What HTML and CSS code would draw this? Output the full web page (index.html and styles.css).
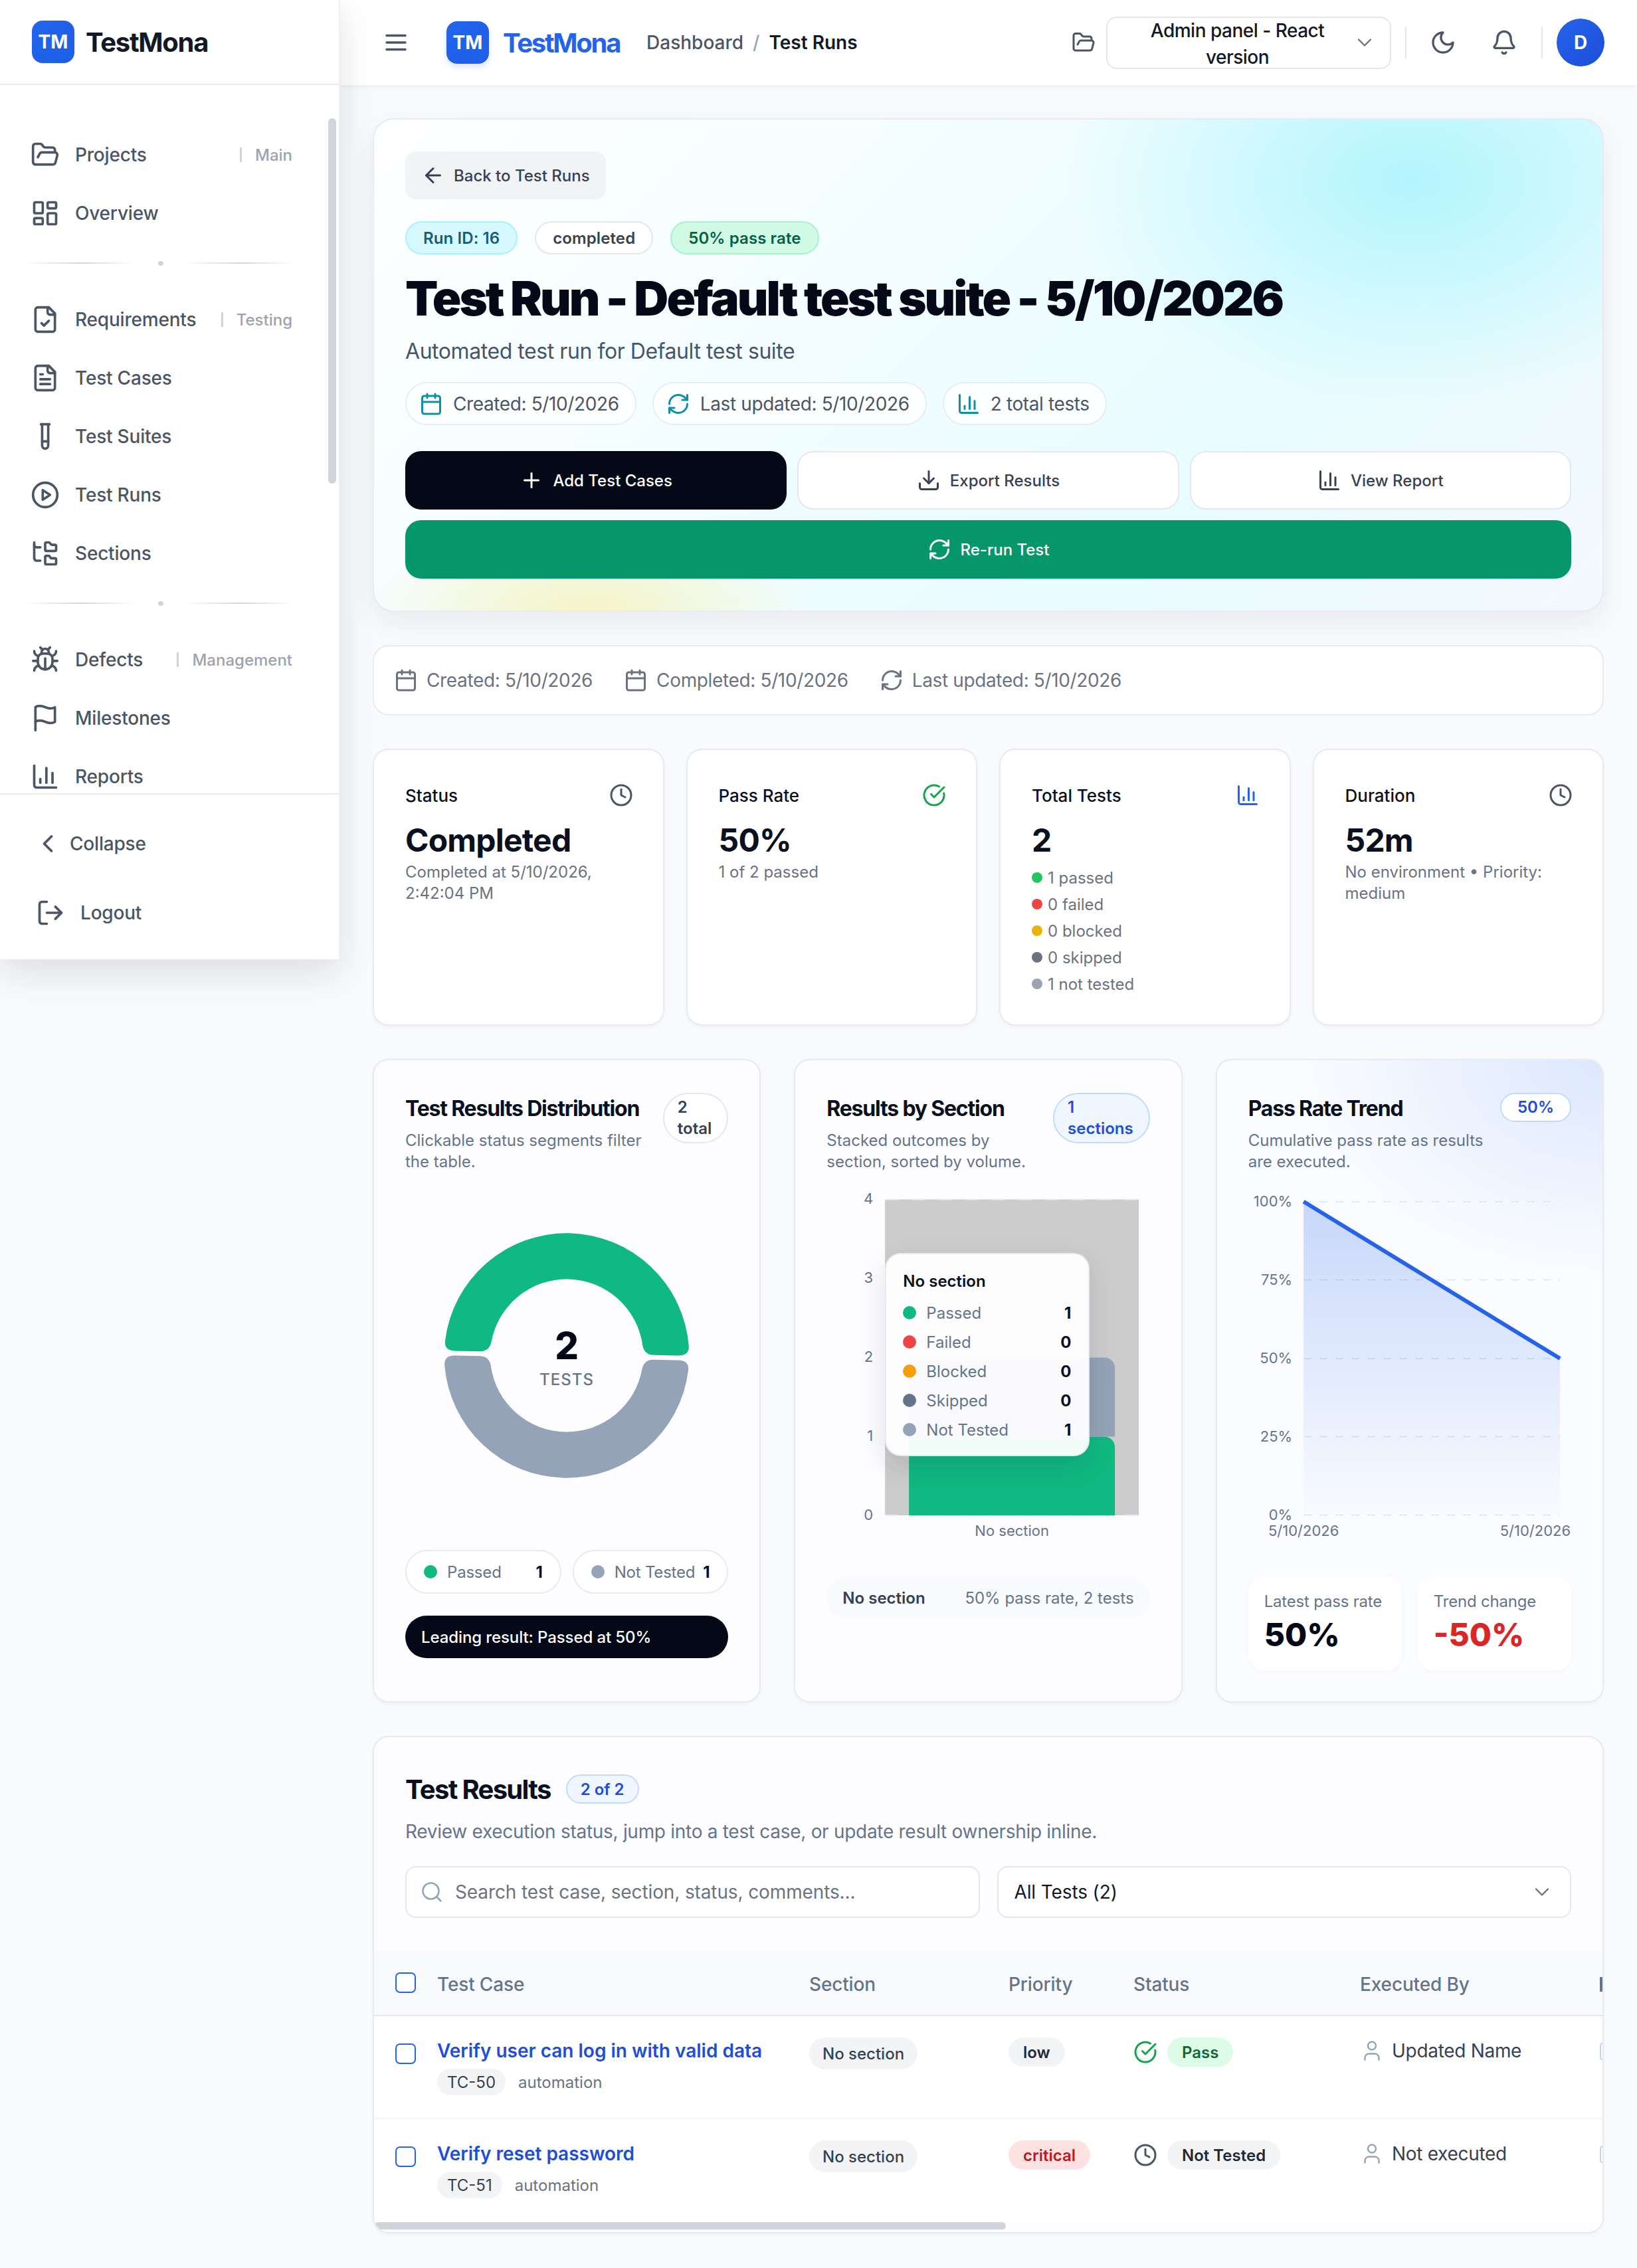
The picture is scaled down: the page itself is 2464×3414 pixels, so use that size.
FILE: index.html
```html
<!DOCTYPE html>
<html lang="en">
<head>
    <meta charset="UTF-8">
    <meta name="viewport" content="width=device-width, initial-scale=1.0">
    <title>TestMona - Test Run</title>
    <link rel="stylesheet" href="styles.css">
</head>
<body>
    <svg class="icon-defs" xmlns="http://www.w3.org/2000/svg">
        <symbol id="i-folder" viewBox="0 0 24 24"><path d="m6 14 1.5-2.9A2 2 0 0 1 9.24 10H20a2 2 0 0 1 1.94 2.5l-1.54 6a2 2 0 0 1-1.95 1.5H4a2 2 0 0 1-2-2V5a2 2 0 0 1 2-2h3.9a2 2 0 0 1 1.69.9l.81 1.2a2 2 0 0 0 1.67.9H18a2 2 0 0 1 2 2v2"/></symbol>
        <symbol id="i-overview" viewBox="0 0 24 24"><rect x="3" y="3" width="7" height="9" rx="1"/><rect x="14" y="3" width="7" height="5" rx="1"/><rect x="14" y="12" width="7" height="9" rx="1"/><rect x="3" y="16" width="7" height="5" rx="1"/></symbol>
        <symbol id="i-file-check" viewBox="0 0 24 24"><path d="M15 2H6a2 2 0 0 0-2 2v16a2 2 0 0 0 2 2h12a2 2 0 0 0 2-2V7Z"/><path d="M14 2v4a2 2 0 0 0 2 2h4"/><path d="m9 15 2 2 4-4"/></symbol>
        <symbol id="i-file-text" viewBox="0 0 24 24"><path d="M15 2H6a2 2 0 0 0-2 2v16a2 2 0 0 0 2 2h12a2 2 0 0 0 2-2V7Z"/><path d="M14 2v4a2 2 0 0 0 2 2h4"/><path d="M10 9H8"/><path d="M16 13H8"/><path d="M16 17H8"/></symbol>
        <symbol id="i-tube" viewBox="0 0 24 24"><path d="M14.5 2v17.5c0 1.4-1.1 2.5-2.5 2.5c-1.4 0-2.5-1.1-2.5-2.5V2"/><path d="M8.5 2h7"/><path d="M14.5 16h-5"/></symbol>
        <symbol id="i-play" viewBox="0 0 24 24"><circle cx="12" cy="12" r="10"/><polygon points="10 8 16 12 10 16 10 8"/></symbol>
        <symbol id="i-tree" viewBox="0 0 24 24"><path d="M20 10a1 1 0 0 0 1-1V6a1 1 0 0 0-1-1h-2.5a1 1 0 0 1-.8-.4l-.9-1.2A1 1 0 0 0 15 3h-2a1 1 0 0 0-1 1v5a1 1 0 0 0 1 1Z"/><path d="M20 21a1 1 0 0 0 1-1v-3a1 1 0 0 0-1-1h-2.9a1 1 0 0 1-.88-.55l-.42-.85a1 1 0 0 0-.92-.6H13a1 1 0 0 0-1 1v5a1 1 0 0 0 1 1Z"/><path d="M3 5a2 2 0 0 0 2 2h3"/><path d="M3 3v13a2 2 0 0 0 2 2h3"/></symbol>
        <symbol id="i-bug" viewBox="0 0 24 24"><path d="m8 2 1.88 1.88"/><path d="M14.12 3.88 16 2"/><path d="M9 7.13v-1a3.003 3.003 0 1 1 6 0v1"/><path d="M12 20c-3.3 0-6-2.7-6-6v-3a4 4 0 0 1 4-4h4a4 4 0 0 1 4 4v3c0 3.3-2.7 6-6 6"/><path d="M12 20v-9"/><path d="M6.53 9C4.6 8.8 3 7.1 3 5"/><path d="M6 13H2"/><path d="M3 21c0-2.1 1.7-3.9 3.8-4"/><path d="M20.97 5c0 2.1-1.6 3.8-3.5 4"/><path d="M22 13h-4"/><path d="M17.2 17c2.1.1 3.8 1.9 3.8 4"/></symbol>
        <symbol id="i-flag" viewBox="0 0 24 24"><path d="M4 15s1-1 4-1 5 2 8 2 4-1 4-1V3s-1 1-4 1-5-2-8-2-4 1-4 1z"/><path d="M4 22v-7"/></symbol>
        <symbol id="i-chart" viewBox="0 0 24 24"><path d="M3 3v16a2 2 0 0 0 2 2h16"/><path d="M18 17V9"/><path d="M13 17V5"/><path d="M8 17v-3"/></symbol>
        <symbol id="i-chevron-left" viewBox="0 0 24 24"><path d="m15 18-6-6 6-6"/></symbol>
        <symbol id="i-chevron-down" viewBox="0 0 24 24"><path d="m6 9 6 6 6-6"/></symbol>
        <symbol id="i-logout" viewBox="0 0 24 24"><path d="M9 21H5a2 2 0 0 1-2-2V5a2 2 0 0 1 2-2h4"/><path d="m16 17 5-5-5-5"/><path d="M21 12H9"/></symbol>
        <symbol id="i-menu" viewBox="0 0 24 24"><path d="M4 12h16"/><path d="M4 6h16"/><path d="M4 18h16"/></symbol>
        <symbol id="i-moon" viewBox="0 0 24 24"><path d="M12 3a6 6 0 0 0 9 9 9 9 0 1 1-9-9Z"/></symbol>
        <symbol id="i-bell" viewBox="0 0 24 24"><path d="M10.268 21a2 2 0 0 0 3.464 0"/><path d="M3.262 15.326A1 1 0 0 0 4 17h16a1 1 0 0 0 .74-1.673C19.41 13.956 18 12.499 18 8A6 6 0 0 0 6 8c0 4.499-1.411 5.956-2.738 7.326"/></symbol>
        <symbol id="i-arrow-left" viewBox="0 0 24 24"><path d="m12 19-7-7 7-7"/><path d="M19 12H5"/></symbol>
        <symbol id="i-calendar" viewBox="0 0 24 24"><rect x="3" y="4" width="18" height="18" rx="2"/><path d="M16 2v4"/><path d="M8 2v4"/><path d="M3 10h18"/></symbol>
        <symbol id="i-refresh" viewBox="0 0 24 24"><path d="M3 12a9 9 0 0 1 9-9 9.75 9.75 0 0 1 6.74 2.74L21 8"/><path d="M21 3v5h-5"/><path d="M21 12a9 9 0 0 1-9 9 9.75 9.75 0 0 1-6.74-2.74L3 16"/><path d="M8 16H3v5"/></symbol>
        <symbol id="i-plus" viewBox="0 0 24 24"><path d="M5 12h14"/><path d="M12 5v14"/></symbol>
        <symbol id="i-download" viewBox="0 0 24 24"><path d="M21 15v4a2 2 0 0 1-2 2H5a2 2 0 0 1-2-2v-4"/><path d="m7 10 5 5 5-5"/><path d="M12 15V3"/></symbol>
        <symbol id="i-clock" viewBox="0 0 24 24"><circle cx="12" cy="12" r="10"/><path d="M12 6v6l4 2"/></symbol>
        <symbol id="i-check" viewBox="0 0 24 24"><path d="M21.801 10A10 10 0 1 1 17 3.335"/><path d="m9 11 3 3L22 4"/></symbol>
        <symbol id="i-search" viewBox="0 0 24 24"><path d="m21 21-4.34-4.34"/><circle cx="11" cy="11" r="8"/></symbol>
        <symbol id="i-user" viewBox="0 0 24 24"><path d="M19 21v-2a4 4 0 0 0-4-4H9a4 4 0 0 0-4 4v2"/><circle cx="12" cy="7" r="4"/></symbol>
    </svg>

    <div class="app">
        <aside class="sidebar">
            <div class="sidebar-head">
                <div class="logo-box">TM</div>
                <div class="sidebar-brand">TestMona</div>
            </div>
            <nav class="sidebar-nav">
                <div class="sidebar-scroll"></div>
                <a class="nav-item"><svg class="icon nav-icon"><use href="#i-folder"/></svg><span>Projects</span><span class="nav-tag">Main</span></a>
                <a class="nav-item"><svg class="icon nav-icon"><use href="#i-overview"/></svg><span>Overview</span></a>
                <div class="nav-divider"><i></i><b></b><i></i></div>
                <a class="nav-item"><svg class="icon nav-icon"><use href="#i-file-check"/></svg><span>Requirements</span><span class="nav-tag">Testing</span></a>
                <a class="nav-item"><svg class="icon nav-icon"><use href="#i-file-text"/></svg><span>Test Cases</span></a>
                <a class="nav-item"><svg class="icon nav-icon"><use href="#i-tube"/></svg><span>Test Suites</span></a>
                <a class="nav-item"><svg class="icon nav-icon"><use href="#i-play"/></svg><span>Test Runs</span></a>
                <a class="nav-item"><svg class="icon nav-icon"><use href="#i-tree"/></svg><span>Sections</span></a>
                <div class="nav-divider"><i></i><b></b><i></i></div>
                <a class="nav-item"><svg class="icon nav-icon"><use href="#i-bug"/></svg><span>Defects</span><span class="nav-tag">Management</span></a>
                <a class="nav-item"><svg class="icon nav-icon"><use href="#i-flag"/></svg><span>Milestones</span></a>
                <a class="nav-item"><svg class="icon nav-icon"><use href="#i-chart"/></svg><span>Reports</span></a>
            </nav>
            <div class="sidebar-foot">
                <a class="foot-item collapse"><svg class="icon nav-icon"><use href="#i-chevron-left"/></svg><span>Collapse</span></a>
                <a class="foot-item logout"><svg class="icon nav-icon"><use href="#i-logout"/></svg><span>Logout</span></a>
            </div>
        </aside>

        <div class="main">
            <header class="topbar">
                <svg class="icon menu-icon"><use href="#i-menu"/></svg>
                <div class="logo-box logo-tall">TM</div>
                <div class="topbar-brand">TestMona</div>
                <div class="crumbs">
                    <span>Dashboard</span>
                    <span class="crumb-sep">/</span>
                    <span class="crumb-current">Test Runs</span>
                </div>
                <div class="topbar-right">
                    <svg class="icon folder-icon"><use href="#i-folder"/></svg>
                    <div class="project-select">
                        <span>Admin panel - React version</span>
                        <svg class="icon chevron"><use href="#i-chevron-down"/></svg>
                    </div>
                    <div class="topbar-line line-first"></div>
                    <svg class="icon top-icon"><use href="#i-moon"/></svg>
                    <svg class="icon top-icon"><use href="#i-bell"/></svg>
                    <div class="topbar-line"></div>
                    <div class="avatar">D</div>
                </div>
            </header>

            <main class="content">
                <section class="hero">
                    <a class="back-btn"><svg class="icon icon-md"><use href="#i-arrow-left"/></svg>Back to Test Runs</a>
                    <div class="hero-badges">
                        <span class="hero-badge badge-cyan">Run ID: 16</span>
                        <span class="hero-badge badge-plain">completed</span>
                        <span class="hero-badge badge-green">50% pass rate</span>
                    </div>
                    <h1>Test Run - Default test suite - 5/10/2026</h1>
                    <p class="hero-sub">Automated test run for Default test suite</p>
                    <div class="hero-meta">
                        <span class="meta-pill"><svg class="icon icon-md teal"><use href="#i-calendar"/></svg>Created: 5/10/2026</span>
                        <span class="meta-pill"><svg class="icon icon-md teal"><use href="#i-refresh"/></svg>Last updated: 5/10/2026</span>
                        <span class="meta-pill"><svg class="icon icon-md teal"><use href="#i-chart"/></svg>2 total tests</span>
                    </div>
                    <div class="hero-actions">
                        <a class="btn btn-dark"><svg class="icon icon-md"><use href="#i-plus"/></svg>Add Test Cases</a>
                        <a class="btn btn-white"><svg class="icon icon-md"><use href="#i-download"/></svg>Export Results</a>
                        <a class="btn btn-white"><svg class="icon icon-md"><use href="#i-chart"/></svg>View Report</a>
                        <a class="btn btn-green"><svg class="icon icon-md"><use href="#i-refresh"/></svg>Re-run Test</a>
                    </div>
                </section>

                <section class="dates-bar">
                    <span class="date-item"><svg class="icon icon-md"><use href="#i-calendar"/></svg>Created: 5/10/2026</span>
                    <span class="date-item"><svg class="icon icon-md"><use href="#i-calendar"/></svg>Completed: 5/10/2026</span>
                    <span class="date-item"><svg class="icon icon-md"><use href="#i-refresh"/></svg>Last updated: 5/10/2026</span>
                </section>

                <section class="stats">
                    <div class="stat-card">
                        <div class="stat-head"><span>Status</span><svg class="icon icon-md gray"><use href="#i-clock"/></svg></div>
                        <div class="stat-value">Completed</div>
                        <div class="stat-sub">Completed at 5/10/2026, 2:42:04 PM</div>
                    </div>
                    <div class="stat-card">
                        <div class="stat-head"><span>Pass Rate</span><svg class="icon icon-md green"><use href="#i-check"/></svg></div>
                        <div class="stat-value">50%</div>
                        <div class="stat-sub">1 of 2 passed</div>
                    </div>
                    <div class="stat-card">
                        <div class="stat-head"><span>Total Tests</span><svg class="icon icon-md blue"><use href="#i-chart"/></svg></div>
                        <div class="stat-value">2</div>
                        <ul class="stat-list">
                            <li><i class="dot dot-pass"></i>1 passed</li>
                            <li><i class="dot dot-fail"></i>0 failed</li>
                            <li><i class="dot dot-block"></i>0 blocked</li>
                            <li><i class="dot dot-skip"></i>0 skipped</li>
                            <li><i class="dot dot-none"></i>1 not tested</li>
                        </ul>
                    </div>
                    <div class="stat-card">
                        <div class="stat-head"><span>Duration</span><svg class="icon icon-md gray"><use href="#i-clock"/></svg></div>
                        <div class="stat-value">52m</div>
                        <div class="stat-sub">No environment • Priority: medium</div>
                    </div>
                </section>

                <section class="charts">
                    <div class="chart-card">
                        <div class="chart-head">
                            <div class="chart-titles">
                                <h3>Test Results Distribution</h3>
                                <p>Clickable status segments filter the table.</p>
                            </div>
                            <span class="chart-badge">2 total</span>
                        </div>
                        <svg class="donut" viewBox="0 0 486 552">
                            <g transform="translate(243 275.5) rotate(1.2)">
                                <path fill="#10b981" d="M-168-3.5Q-184.5-3.5-183.5-18A184.4 184.4 0 0 1 183.5-18Q184.5-3.5 168-3.5L131-3.5Q117-3.5 114-17A115.3 115.3 0 0 0-114-17Q-117-3.5-131-3.5Z"/>
                                <path fill="#94a3b8" d="M-168 3.5Q-184.5 3.5-183.5 18A184.4 184.4 0 0 0 183.5 18Q184.5 3.5 168 3.5L131 3.5Q117 3.5 114 17A115.3 115.3 0 0 1-114 17Q-117 3.5-131 3.5Z"/>
                            </g>
                            <text class="donut-num" x="243" y="281" text-anchor="middle">2</text>
                            <text class="donut-label" x="243" y="320" text-anchor="middle">TESTS</text>
                        </svg>
                        <div class="legend-row">
                            <span class="legend-pill"><i class="dot dot-pass"></i><span>Passed</span><b>1</b></span>
                            <span class="legend-pill"><i class="dot dot-none2"></i><span>Not Tested</span><b>1</b></span>
                        </div>
                        <div class="leading">Leading result: Passed at 50%</div>
                    </div>

                    <div class="chart-card">
                        <div class="chart-head">
                            <div class="chart-titles">
                                <h3>Results by Section</h3>
                                <p>Stacked outcomes by section, sorted by volume.</p>
                            </div>
                            <span class="chart-badge badge-blue">1 sections</span>
                        </div>
                        <div class="bar-chart">
                            <svg viewBox="0 0 486 580">
                                <rect x="88" y="40.5" width="382" height="475.5" fill="#cccccc"/>
                                <path d="M88 40.5H470M88 516H470" stroke="#e8edf5" stroke-width="2" stroke-dasharray="20 20"/>
                                <path fill="#10b981" d="M124 516V397.5H418a16 16 0 0 1 16 16V516Z"/>
                                <path fill="#94a3b8" d="M124 397.5V278.5H418a16 16 0 0 1 16 16V397.5Z"/>
                                <g class="axis" text-anchor="end">
                                    <text x="70" y="47">4</text>
                                    <text x="70" y="166">3</text>
                                    <text x="70" y="285">2</text>
                                    <text x="70" y="404">1</text>
                                    <text x="70" y="523">0</text>
                                </g>
                                <text class="axis" x="279" y="547" text-anchor="middle">No section</text>
                            </svg>
                            <div class="chart-tip">
                                <div class="tip-title">No section</div>
                                <div class="tip-row"><i class="dot dot-pass"></i><span>Passed</span><b>1</b></div>
                                <div class="tip-row"><i class="dot dot-fail"></i><span>Failed</span><b>0</b></div>
                                <div class="tip-row"><i class="dot dot-amber"></i><span>Blocked</span><b>0</b></div>
                                <div class="tip-row"><i class="dot dot-slate"></i><span>Skipped</span><b>0</b></div>
                                <div class="tip-row"><i class="dot dot-none2"></i><span>Not Tested</span><b>1</b></div>
                            </div>
                        </div>
                        <div class="section-line"><b>No section</b><span>50% pass rate, 2 tests</span></div>
                    </div>

                    <div class="chart-card trend-card">
                        <div class="chart-head">
                            <div class="chart-titles">
                                <h3>Pass Rate Trend</h3>
                                <p>Cumulative pass rate as results are executed.</p>
                            </div>
                            <span class="chart-badge badge-blue badge-one">50%</span>
                        </div>
                        <svg class="trend-chart" viewBox="0 0 486 580">
                            <defs>
                                <linearGradient id="trendFill" x1="0" y1="0" x2="0" y2="1">
                                    <stop offset="0" stop-color="#2563eb" stop-opacity="0.24"/>
                                    <stop offset="1" stop-color="#2563eb" stop-opacity="0.01"/>
                                </linearGradient>
                            </defs>
                            <path d="M83 43.7H469M83 161.6H469M83 280H469M83 397.6H469M83 515.5H469" stroke="#e1e8f6" stroke-width="2" stroke-dasharray="12 12"/>
                            <path fill="url(#trendFill)" d="M83 43.7L469 280V515.5H83Z"/>
                            <path fill="none" stroke="#2563eb" stroke-width="6" d="M83 43.7L469 280"/>
                            <g class="axis" text-anchor="end">
                                <text x="66" y="51">100%</text>
                                <text x="66" y="169">75%</text>
                                <text x="66" y="287">50%</text>
                                <text x="66" y="405">25%</text>
                                <text x="66" y="523">0%</text>
                            </g>
                            <text class="axis" x="83" y="547" text-anchor="middle">5/10/2026</text>
                            <text class="axis" x="485" y="547" text-anchor="end">5/10/2026</text>
                        </svg>
                        <div class="trend-stats">
                            <div class="trend-stat"><span>Latest pass rate</span><b>50%</b></div>
                            <div class="trend-stat"><span>Trend change</span><b class="red">-50%</b></div>
                        </div>
                    </div>
                </section>

                <section class="results">
                    <div class="results-head">
                        <div class="results-title"><h2>Test Results</h2><span class="count-badge">2 of 2</span></div>
                        <p>Review execution status, jump into a test case, or update result ownership inline.</p>
                        <div class="filters">
                            <div class="field"><svg class="icon icon-md search-icon"><use href="#i-search"/></svg><span>Search test case, section, status, comments...</span></div>
                            <div class="field field-select"><span>All Tests (2)</span><svg class="icon chevron"><use href="#i-chevron-down"/></svg></div>
                        </div>
                    </div>
                    <div class="table-wrap">
                        <table>
                            <thead>
                                <tr>
                                    <th class="col-check"><i class="checkbox"></i></th>
                                    <th class="col-case">Test Case</th>
                                    <th class="col-section">Section</th>
                                    <th class="col-priority">Priority</th>
                                    <th class="col-status">Status</th>
                                    <th class="col-exec">Executed By</th>
                                    <th class="col-last"><i class="cut-stem"></i></th>
                                </tr>
                            </thead>
                            <tbody>
                                <tr>
                                    <td class="check-cell"><i class="checkbox"></i></td>
                                    <td>
                                        <a class="case-link">Verify user can log in with valid data</a>
                                        <div class="case-meta"><span class="case-id">TC-50</span><span>automation</span></div>
                                    </td>
                                    <td><span class="pill pill-section">No section</span></td>
                                    <td><span class="pill">low</span></td>
                                    <td><div class="status-cell"><svg class="icon icon-md green"><use href="#i-check"/></svg><span class="pill pill-pass">Pass</span></div></td>
                                    <td><div class="exec-cell"><svg class="icon icon-md slate"><use href="#i-user"/></svg>Updated Name</div></td>
                                    <td><i class="cut-box"></i></td>
                                </tr>
                                <tr>
                                    <td class="check-cell"><i class="checkbox"></i></td>
                                    <td>
                                        <a class="case-link">Verify reset password</a>
                                        <div class="case-meta"><span class="case-id">TC-51</span><span>automation</span></div>
                                    </td>
                                    <td><span class="pill pill-section">No section</span></td>
                                    <td><span class="pill pill-critical">critical</span></td>
                                    <td><div class="status-cell"><svg class="icon icon-md gray"><use href="#i-clock"/></svg><span class="pill">Not Tested</span></div></td>
                                    <td><div class="exec-cell"><svg class="icon icon-md slate"><use href="#i-user"/></svg>Not executed</div></td>
                                    <td><i class="cut-box"></i></td>
                                </tr>
                            </tbody>
                        </table>
                    </div>
                    <div class="table-scroll"></div>
                </section>
            </main>
        </div>
    </div>
</body>
</html>
```

FILE: styles.css
```css
* {
    margin: 0;
    padding: 0;
    box-sizing: border-box;
    font-family: Inter, 'Noto Sans', sans-serif;
}

html, body {
    height: 3414px;
    overflow: hidden;
}

body {
    background: #f9fafc;
    color: #0b1020;
}

.icon-defs {
    display: none;
}

.icon {
    fill: none;
    stroke: currentColor;
    stroke-width: 2;
    stroke-linecap: round;
    stroke-linejoin: round;
    flex-shrink: 0;
    display: block;
}

.icon-md {
    width: 36px;
    height: 36px;
}

.teal { color: #0e8fa8; }
.gray { color: #4b5563; }
.green { color: #16a34a; }
.blue { color: #2563eb; }
.slate { color: #94a3b8; }

.app {
    display: flex;
    align-items: flex-start;
}

/* sidebar */
.sidebar {
    width: 512px;
    height: 1444px;
    flex-shrink: 0;
    background: white;
    border-right: 2px solid #eceef2;
    box-shadow: 0 20px 50px rgba(15, 23, 42, 0.12);
    display: flex;
    flex-direction: column;
    position: relative;
    z-index: 2;
}

.sidebar-head {
    height: 128px;
    flex-shrink: 0;
    display: flex;
    align-items: center;
    gap: 17px;
    padding-left: 48px;
    border-bottom: 2px solid #e9ebef;
}

.logo-box {
    width: 64px;
    height: 64px;
    border-radius: 16px;
    background: linear-gradient(135deg, #2563eb, #1d5fe8);
    color: white;
    font-size: 28px;
    font-weight: 700;
    display: flex;
    align-items: center;
    justify-content: center;
    flex-shrink: 0;
}

.sidebar-brand {
    font-size: 40px;
    font-weight: 700;
    letter-spacing: -1.3px;
    color: #111827;
}

.sidebar-nav {
    flex: 1;
    overflow: hidden;
    padding-top: 61px;
    position: relative;
}

.sidebar-scroll {
    position: absolute;
    right: 4px;
    top: 50px;
    width: 12px;
    height: 550px;
    border-radius: 6px;
    background: #d1d5db;
}

.nav-item {
    height: 88px;
    display: flex;
    align-items: center;
    padding: 0 70px 0 46px;
    font-size: 28px;
    font-weight: 500;
    letter-spacing: -0.2px;
    color: #4b5563;
}

.nav-icon {
    width: 44px;
    height: 44px;
    margin-right: 23px;
}

.nav-tag {
    margin-left: auto;
    font-size: 24px;
    letter-spacing: 0;
    color: #9ca3af;
    display: flex;
    align-items: center;
}

.nav-tag::before {
    content: "";
    width: 3px;
    height: 22px;
    background: #d1d5db;
    margin-right: 20px;
}

.nav-divider {
    height: 72px;
    padding: 30px 62px 0 36px;
    display: flex;
    align-items: flex-start;
    justify-content: space-between;
}

.nav-divider i {
    display: block;
    width: 172px;
    height: 2px;
    background: linear-gradient(90deg, transparent, #d1d5db, transparent);
}

.nav-divider b {
    display: block;
    width: 8px;
    height: 7px;
    margin-top: -2px;
    border-radius: 50%;
    background: #d1d5db;
}

.sidebar-foot {
    height: 250px;
    flex-shrink: 0;
    border-top: 2px solid #e9ebef;
    padding-top: 38px;
}

.foot-item {
    display: flex;
    align-items: center;
    font-size: 28px;
    font-weight: 500;
    letter-spacing: -0.2px;
    color: #4b5563;
}

.collapse {
    height: 72px;
    padding-left: 50px;
}

.collapse .nav-icon {
    margin-right: 11px;
}

.logout {
    height: 88px;
    margin-top: 24px;
    padding-left: 54px;
}

/* top bar */
.main {
    flex: 1;
    min-width: 0;
}

.topbar {
    height: 128px;
    background: white;
    display: flex;
    align-items: center;
    padding: 0 49px 0 63px;
    box-shadow: 0 2px 8px rgba(15, 23, 42, 0.06);
    position: relative;
}

.menu-icon {
    width: 42px;
    height: 42px;
    color: #4b5563;
    margin-right: 55px;
}

.logo-tall {
    box-shadow: 0 4px 10px rgba(37, 99, 235, 0.2);
}

.topbar-brand {
    margin-left: 21px;
    font-size: 40px;
    font-weight: 700;
    letter-spacing: -2.3px;
    color: #2563eb;
}

.crumbs {
    margin-left: 40px;
    display: flex;
    align-items: center;
    gap: 14px;
    font-size: 28px;
    font-weight: 500;
    color: #4b5563;
}

.crumb-sep {
    color: #9ca3af;
}

.crumb-current {
    font-weight: 600;
    color: #111827;
}

.topbar-right {
    margin-left: auto;
    display: flex;
    align-items: center;
}

.folder-icon {
    width: 36px;
    height: 36px;
    color: #4b5563;
    margin-right: 16px;
}

.project-select {
    width: 429px;
    height: 79px;
    border: 2px solid #e5e7f0;
    border-radius: 16px;
    background: white;
    display: flex;
    align-items: center;
    padding: 0 20px 0 22px;
    font-size: 28px;
    font-weight: 500;
    letter-spacing: -0.5px;
    line-height: 40px;
    color: #111827;
}

.project-select span {
    flex: 1;
    text-align: center;
    padding-top: 3px;
}

.chevron {
    width: 36px;
    height: 36px;
    color: #6b7280;
    stroke-width: 1.6;
}

.topbar-line {
    width: 2px;
    height: 48px;
    background: #e5e7eb;
    margin: 0 21px;
}

.line-first {
    margin-right: 18px;
}

.top-icon {
    width: 40px;
    height: 40px;
    color: #4b5563;
    margin-left: 17px;
    margin-right: 35px;
}

.top-icon + .top-icon {
    margin-left: 17px;
    margin-right: 15px;
}

.avatar {
    width: 72px;
    height: 72px;
    border-radius: 50%;
    background: linear-gradient(135deg, #2563eb, #1d4ed8);
    color: white;
    font-size: 28px;
    font-weight: 700;
    display: flex;
    align-items: center;
    justify-content: center;
}

/* page content */
.content {
    padding: 50px 50px 0 49px;
}

.hero {
    height: 743px;
    border: 2px solid #e7e9f4;
    border-radius: 32px;
    padding: 48px 47px;
    background:
        radial-gradient(ellipse 520px 340px at 1560px 90px, #b3f5fd 0%, rgba(179, 245, 253, 0.55) 45%, rgba(179, 245, 253, 0) 100%),
        radial-gradient(ellipse 340px 150px at 320px 745px, #f5f4c4 0%, rgba(245, 244, 196, 0) 100%),
        linear-gradient(135deg, #ffffff 0%, #f0fdff 45%, #e8fcff 70%, #f4f8fd 100%);
    box-shadow: 0 16px 40px rgba(15, 23, 42, 0.07);
}

.back-btn {
    display: inline-flex;
    align-items: center;
    gap: 13px;
    height: 72px;
    padding: 0 24px;
    border-radius: 16px;
    background: #f1f3f5;
    font-size: 24px;
    font-weight: 500;
    color: #374151;
}

.hero-badges {
    display: flex;
    gap: 26px;
    margin-top: 33px;
}

.hero-badge {
    height: 50px;
    padding: 0 25px;
    border-radius: 25px;
    border: 2px solid;
    font-size: 24px;
    font-weight: 600;
    letter-spacing: 0.1px;
    display: flex;
    align-items: center;
}

.badge-cyan {
    background: #d5f9fe;
    border-color: #a5f3fc;
    color: #155e75;
}

.badge-plain {
    background: white;
    border-color: #e5e7eb;
    color: #374151;
}

.badge-green {
    background: #d1fae5;
    border-color: #a7f3d0;
    color: #065f46;
}

h1 {
    margin-top: 26px;
    font-size: 72px;
    line-height: 80px;
    font-weight: 900;
    letter-spacing: -3px;
    color: #050816;
    white-space: nowrap;
}

.hero-sub {
    margin-top: 18px;
    font-size: 32px;
    line-height: 44px;
    letter-spacing: -0.44px;
    color: #475569;
}

.hero-meta {
    display: flex;
    gap: 24px;
    margin-top: 24px;
}

.meta-pill {
    height: 65px;
    padding: 0 24px 0 19px;
    border: 2px solid #e8edf3;
    border-radius: 33px;
    background: rgba(255, 255, 255, 0.85);
    font-size: 28px;
    letter-spacing: -0.38px;
    color: #4b5563;
    display: flex;
    align-items: center;
    gap: 15px;
}

.hero-actions {
    display: grid;
    grid-template-columns: repeat(3, 1fr);
    gap: 16px;
    margin-top: 39px;
}

.btn {
    height: 88px;
    border-radius: 24px;
    font-size: 24px;
    font-weight: 500;
    display: flex;
    align-items: center;
    justify-content: center;
    gap: 14px;
}

.btn-dark {
    background: #050816;
    color: white;
}

.btn-white {
    background: white;
    border: 2px solid #e5e7f0;
    color: #374151;
}

.btn-green {
    grid-column: 1 / -1;
    background: #059669;
    color: white;
}

.dates-bar {
    height: 106px;
    margin-top: 50px;
    padding-left: 30px;
    background: white;
    border: 2px solid #e8eaf2;
    border-radius: 24px;
    display: flex;
    align-items: center;
    gap: 47px;
}

.date-item {
    display: flex;
    align-items: center;
    gap: 13px;
    font-size: 28px;
    letter-spacing: -0.36px;
    color: #6b7280;
}

.stats {
    display: grid;
    grid-template-columns: repeat(4, minmax(0, 1fr));
    gap: 33px;
    margin-top: 50px;
}

.stat-card {
    height: 417px;
    padding: 48px 47px;
    background: white;
    border: 2px solid #e8eaf2;
    border-radius: 24px;
    box-shadow: 0 2px 6px rgba(15, 23, 42, 0.04);
}

.stat-head {
    display: flex;
    justify-content: space-between;
    align-items: center;
    height: 40px;
    font-size: 26px;
    font-weight: 500;
    margin-right: -2px;
}

.stat-value {
    margin-top: 18px;
    font-size: 48px;
    line-height: 60px;
    font-weight: 700;
    letter-spacing: -0.8px;
}

.stat-sub {
    margin-top: 2px;
    font-size: 24px;
    line-height: 32px;
    color: #6b7280;
}

.stat-list {
    list-style: none;
    margin-top: 10px;
}

.stat-list li {
    display: flex;
    align-items: center;
    gap: 8px;
    height: 32px;
    margin-bottom: 8px;
    font-size: 24px;
    color: #6b7280;
}

.dot {
    display: block;
    width: 16px;
    height: 16px;
    border-radius: 50%;
    flex-shrink: 0;
}

.dot-pass { background: #22c55e; }
.dot-fail { background: #ef4444; }
.dot-block { background: #eab308; }
.dot-skip { background: #6b7280; }
.dot-none { background: #9ca3af; }
.dot-amber { background: #f59e0b; }
.dot-slate { background: #64748b; }
.dot-none2 { background: #94a3b8; }

/* charts */
.charts {
    display: grid;
    grid-template-columns: repeat(3, minmax(0, 1fr));
    gap: 50px;
    margin-top: 50px;
}

.chart-card {
    height: 969px;
    padding: 50px 47px 0;
    background: #fdfdff;
    border: 2px solid #e8eaf2;
    border-radius: 24px;
    box-shadow: 0 2px 6px rgba(15, 23, 42, 0.04);
}

.chart-card .dot-pass { background: #10b981; }

.chart-head {
    height: 119px;
    display: flex;
    justify-content: space-between;
    align-items: flex-start;
    gap: 24px;
}

.chart-titles {
    flex: 1;
    min-width: 0;
}

.chart-titles h3 {
    margin-top: 1px;
    font-size: 32px;
    line-height: 44px;
    font-weight: 700;
    letter-spacing: -1.2px;
    white-space: nowrap;
}

.chart-titles p {
    margin-top: 10px;
    font-size: 24px;
    line-height: 32px;
    color: #64748b;
}

.chart-badge {
    width: min-content;
    flex-shrink: 0;
    margin-top: -1px;
    padding: 4px 23px 4px 20px;
    border: 2px solid #e5e7f0;
    border-radius: 38px;
    background: white;
    font-size: 24px;
    line-height: 32px;
    font-weight: 600;
    color: #334155;
}

.badge-blue {
    background: #eff6ff;
    border-color: #bfdbfe;
    color: #1d4ed8;
}

.badge-one {
    background: white;
    padding: 4px 24px;
}

.donut {
    display: block;
    width: 486px;
    height: 552px;
    margin-bottom: 16px;
}

.donut-num {
    font-size: 56px;
    font-weight: 800;
    fill: #050816;
}

.donut-label {
    font-size: 24px;
    font-weight: 500;
    letter-spacing: 1px;
    fill: #64748b;
}

.legend-row {
    display: grid;
    grid-template-columns: 1fr 1fr;
    gap: 17px;
}

.legend-pill {
    height: 66px;
    padding: 0 26px;
    border: 2px solid #e8eaf2;
    border-radius: 33px;
    background: white;
    font-size: 24px;
    letter-spacing: -0.2px;
    color: #64748b;
    display: flex;
    align-items: center;
}

.legend-pill .dot,
.tip-row .dot {
    width: 20px;
    height: 20px;
    margin-right: 15px;
}

.legend-pill b,
.tip-row b {
    margin-left: auto;
    font-weight: 700;
    color: #0b1020;
}

.leading {
    height: 64px;
    margin-top: 33px;
    padding-left: 24px;
    border-radius: 32px;
    background: #050816;
    color: white;
    font-size: 24px;
    font-weight: 500;
    letter-spacing: -0.1px;
    display: flex;
    align-items: center;
}

.bar-chart {
    position: relative;
    height: 580px;
    margin-bottom: 28px;
}

.bar-chart svg,
.trend-chart {
    display: block;
    width: 100%;
    height: 580px;
}

.axis {
    font-size: 22px;
    fill: #64748b;
}

.chart-tip {
    position: absolute;
    left: 88px;
    top: 121px;
    width: 308px;
    height: 306px;
    padding: 24px 26px 24px 25px;
    border: 2px solid #e8eaf2;
    border-radius: 24px;
    background: rgba(255, 255, 255, 0.95);
    box-shadow: 0 16px 40px rgba(15, 23, 42, 0.12);
    font-size: 24px;
}

.tip-title {
    font-weight: 600;
    line-height: 34px;
    margin-bottom: 8px;
}

.tip-row {
    display: flex;
    align-items: center;
    height: 44px;
    color: #64748b;
}

.section-line {
    height: 64px;
    padding: 0 24px;
    border-radius: 32px;
    background: #f8fafc;
    font-size: 24px;
    color: #64748b;
    display: flex;
    align-items: center;
    justify-content: space-between;
}

.section-line b {
    font-weight: 600;
    color: #334155;
}

.trend-card {
    background:
        radial-gradient(ellipse 460px 330px at 100% 0, #dde7fd 0%, rgba(221, 231, 253, 0) 100%),
        #fbfcff;
}

.trend-chart {
    margin-bottom: 28px;
}

.trend-stats {
    display: grid;
    grid-template-columns: 1fr 1fr;
    gap: 24px;
}

.trend-stat {
    height: 142px;
    padding: 22px 24px;
    border-radius: 24px;
    background: white;
    box-shadow: 0 2px 8px rgba(15, 23, 42, 0.03);
}

.trend-stat span {
    display: block;
    font-size: 24px;
    line-height: 32px;
    letter-spacing: -0.2px;
    color: #64748b;
    white-space: nowrap;
}

.trend-stat b {
    display: block;
    margin-top: 6px;
    font-size: 48px;
    line-height: 56px;
    font-weight: 800;
    color: #050816;
}

.trend-stat .red {
    color: #dc2626;
}

/* results table */
.results {
    height: 749px;
    margin-top: 50px;
    background: #fdfdff;
    border: 2px solid #e8eaf2;
    border-radius: 24px;
    box-shadow: 0 2px 6px rgba(15, 23, 42, 0.04);
    position: relative;
    overflow: hidden;
}

.results-head {
    padding: 50px 47px 0;
}

.results-title {
    display: flex;
    align-items: center;
    gap: 23px;
    height: 56px;
}

h2 {
    font-size: 40px;
    font-weight: 700;
    letter-spacing: -1.7px;
}

.count-badge {
    height: 44px;
    padding: 0 20px;
    border: 2px solid #bfdbfe;
    border-radius: 22px;
    background: #eff6ff;
    color: #1d4ed8;
    font-size: 24px;
    font-weight: 600;
    display: flex;
    align-items: center;
}

.results-head p {
    margin-top: 14px;
    font-size: 28px;
    line-height: 44px;
    letter-spacing: -0.29px;
    color: #64748b;
}

.filters {
    display: grid;
    grid-template-columns: 1fr 1fr;
    gap: 26px;
    margin-top: 30px;
}

.field {
    height: 78px;
    border: 2px solid #e5e7f0;
    border-radius: 16px;
    background: white;
    padding: 0 24px 0 20px;
    font-size: 28px;
    letter-spacing: -0.12px;
    color: #6b7280;
    display: flex;
    align-items: center;
    gap: 17px;
}

.search-icon {
    color: #94a3b8;
    stroke-width: 1.7;
}

.field-select {
    justify-content: space-between;
    color: #111827;
    padding-left: 24px;
}

.table-wrap {
    margin-top: 49px;
    overflow: hidden;
}

table {
    border-collapse: collapse;
    table-layout: fixed;
    width: 2345px;
}

th {
    height: 98px;
    padding-top: 4px;
    background: #f8fafc;
    border-bottom: 2px solid #e5e7eb;
    text-align: left;
    font-size: 28px;
    font-weight: 500;
    letter-spacing: -0.15px;
    color: #64748b;
}

.col-check { width: 95px; padding-left: 32px; }
.col-case { width: 560px; }
.col-section { width: 300px; }
.col-priority { width: 188px; }
.col-status { width: 341px; }
.col-exec { width: 361px; }
.col-last { width: 500px; }

td {
    height: 155px;
    vertical-align: top;
    padding-top: 32px;
    border-bottom: 2px solid #f1f3f6;
    background: white;
    font-size: 28px;
}

tbody tr:last-child td {
    border-bottom: none;
}

.check-cell {
    padding-left: 32px;
    padding-top: 41px;
}

.checkbox {
    display: block;
    width: 31px;
    height: 31px;
    border: 2px solid #2563eb;
    border-radius: 7px;
    background: white;
}

th .checkbox {
    margin-top: -4px;
}

.case-link {
    display: block;
    line-height: 40px;
    font-weight: 600;
    color: #1d4ed8;
}

.case-meta {
    display: flex;
    align-items: center;
    gap: 19px;
    margin-top: 7px;
    font-size: 24px;
    color: #6b7280;
}

.case-id {
    height: 40px;
    padding: 0 15px;
    border-radius: 20px;
    background: #f3f4f6;
    color: #374151;
    display: flex;
    align-items: center;
}

.pill {
    display: inline-flex;
    align-items: center;
    height: 44px;
    padding: 0 22px;
    border-radius: 22px;
    background: #f3f4f6;
    font-size: 24px;
    font-weight: 600;
    color: #1f2937;
}

.pill-section {
    height: 48px;
    padding: 0 20px;
    border-radius: 24px;
    font-weight: 500;
    color: #374151;
}

.pill-critical {
    background: #fee2e2;
    color: #b91c1c;
}

.pill-pass {
    background: #dcfce7;
    color: #166534;
}

.status-cell {
    display: flex;
    align-items: center;
    gap: 15px;
}

.exec-cell {
    display: flex;
    align-items: center;
    gap: 12px;
    height: 40px;
    letter-spacing: -0.3px;
    color: #374151;
}

.exec-cell .icon {
    stroke-width: 1.6;
}

.cut-stem {
    display: block;
    width: 5px;
    height: 22px;
    background: #64748b;
}

.cut-box {
    display: block;
    width: 20px;
    height: 26px;
    margin-top: 8px;
    border: 2px solid #cbd5e1;
    border-radius: 4px;
}

.table-scroll {
    position: absolute;
    left: 1px;
    bottom: 4px;
    width: 950px;
    height: 11px;
    border-radius: 6px;
    background: #d1d5db;
}
```
